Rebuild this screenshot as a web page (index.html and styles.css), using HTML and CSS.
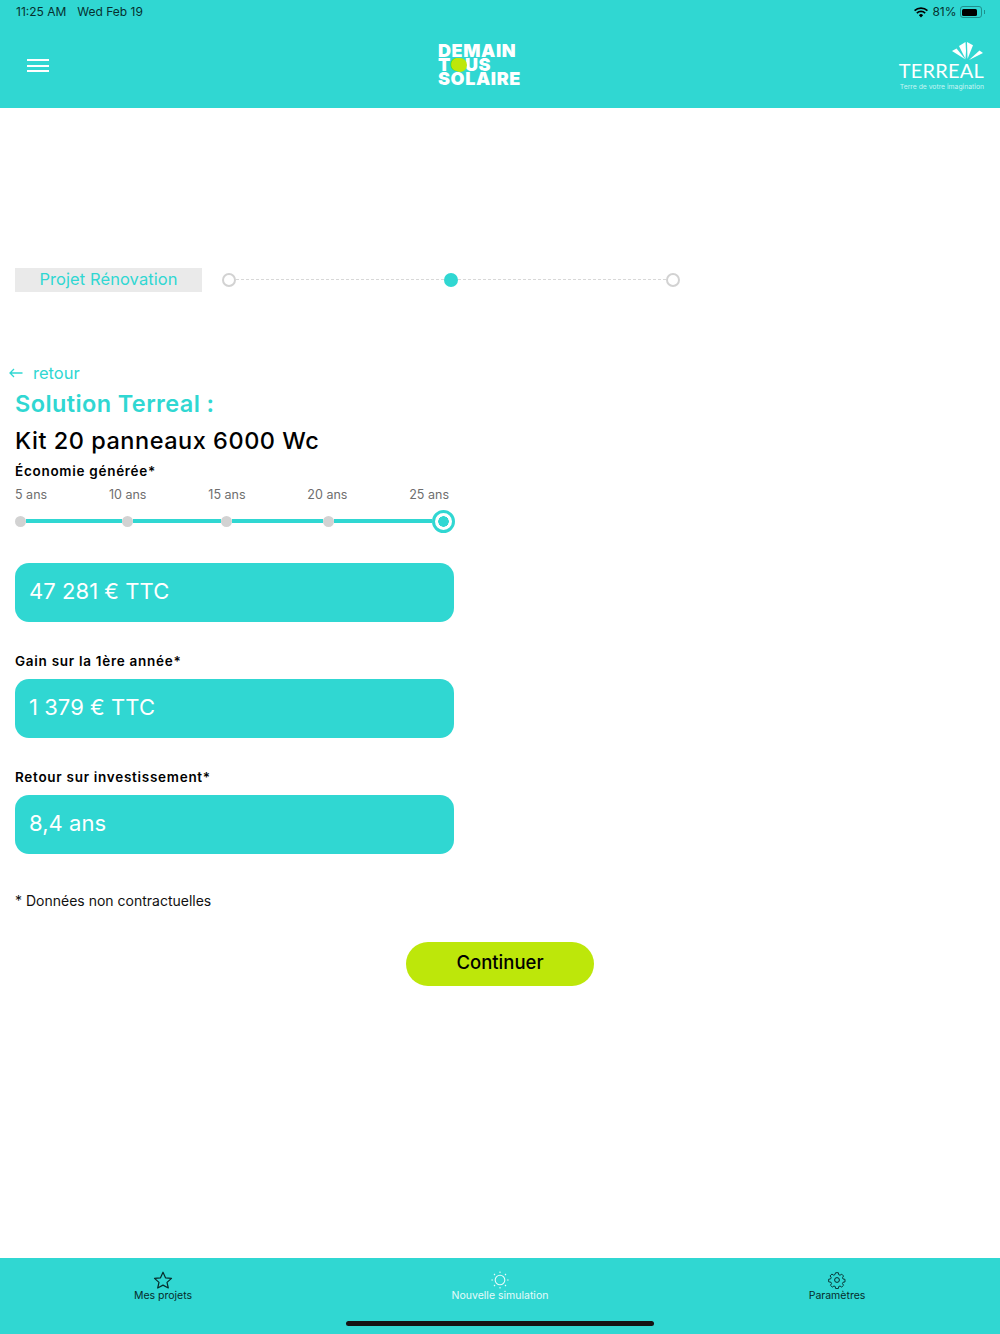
FILE: index.html
```html
<!DOCTYPE html>
<html lang="fr">
<head>
<meta charset="utf-8">
<title>Solution Terreal</title>
<link rel="stylesheet" href="styles.css">
</head>
<body>
<div class="app">
  <header class="header">
    <div class="status">
      <div class="status-left"><span>11:25 AM</span><span>Wed Feb 19</span></div>
      <div class="status-right">
        <svg class="wifi" width="14" height="11" viewBox="0 0 16 12"><path d="M8 11.600 5.600 9a3.400 3.400 0 0 1 4.800 0zM3.900 7.300 2.600 5.900a7.700 7.700 0 0 1 10.800 0l-1.300 1.400a5.900 5.900 0 0 0-8.200 0zM1.300 4.600 0 3.200a11.400 11.400 0 0 1 16 0l-1.300 1.400a9.600 9.600 0 0 0-13.400 0z" fill="#000"/></svg>
        <span>81%</span>
        <span class="battery"><span class="battery-fill"></span></span>
        <span class="battery-cap"></span>
      </div>
    </div>
    <div class="header-main">
      <button class="burger" aria-label="Menu"><span></span><span></span><span></span></button>
      <div class="logo">
        <span>DEMAIN</span><span>T<span class="logo-o">O</span>US</span><span>SOLAIRE</span>
        <i class="logo-dot"></i>
      </div>
      <div class="terreal">
        <svg class="terreal-mark" width="31" height="20" viewBox="0 0 31 20"><path d="M0 10 4.500 7.500 13.500 18.500z" fill="#fff"/><path d="M7 5 13.500 1 14 10 13.500 18z" fill="#fff"/><path d="M15 1 21 4.300 15.500 18z" fill="#fff"/><path d="M17 19 27.500 9.500 31 12z" fill="#fff"/></svg>
        <span class="terreal-name">TERREAL</span>
        <span class="terreal-tag">Terre de votre imagination</span>
      </div>
    </div>
  </header>

  <main class="main">
    <div class="stepper-row">
      <div class="project">Projet Rénovation</div>
      <div class="stepper">
        <span class="step"></span><span class="dash"></span>
        <span class="step step-active"></span><span class="dash"></span>
        <span class="step"></span>
      </div>
    </div>

    <a class="back"><svg width="14" height="10" viewBox="0 0 14 10"><path d="M13.500 5H1M5 1 1 5l4 4" fill="none" stroke="#30d7d2" stroke-width="1.300"/></svg><span>retour</span></a>

    <h1 class="title">Solution Terreal :</h1>
    <h2 class="kit">Kit 20 panneaux 6000 Wc</h2>

    <div class="label label-first">Économie générée*</div>
    <div class="ticks"><span>5 ans</span><span>10 ans</span><span>15 ans</span><span>20 ans</span><span>25 ans</span></div>
    <div class="slider">
      <span class="knob"></span><span class="seg" style="width:96px"></span>
      <span class="knob"></span><span class="seg" style="width:88px"></span>
      <span class="knob"></span><span class="seg" style="width:91px"></span>
      <span class="knob"></span><span class="seg" style="width:98px"></span>
      <span class="thumb"></span>
    </div>

    <div class="value value-first">47 281 € TTC</div>
    <div class="label">Gain sur la 1ère année*</div>
    <div class="value">1 379 € TTC</div>
    <div class="label">Retour sur investissement*</div>
    <div class="value">8,4 ans</div>

    <p class="note">* Données non contractuelles</p>

    <div class="actions"><button class="continue">Continuer</button></div>
  </main>

  <nav class="tabbar">
    <div class="tabs">
      <a class="tab">
        <svg width="20" height="18" viewBox="0 0 20 18"><path d="M10 1.200 12.500 6.800 18.500 7.400 14 11.400 15.300 17 10 14.100 4.700 17 6 11.400 1.500 7.400 7.500 6.800z" fill="none" stroke="#062b2b" stroke-width="1.200" stroke-linejoin="round"/></svg>
        <span>Mes projets</span>
      </a>
      <a class="tab tab-active">
        <svg width="20" height="18" viewBox="0 0 20 18"><circle cx="10" cy="9" r="4.800" fill="none" stroke="#e6fbfa" stroke-width="1.100"/><path d="M10 .400v1.500M10 16.100v1.500M1.400 9h1.500M17.100 9h1.500M4 3l1 1M15 14l1 1M16 3l-1 1M5 14l-1 1" stroke="#e6fbfa" stroke-width="1.100"/></svg>
        <span>Nouvelle simulation</span>
      </a>
      <a class="tab">
        <svg width="20" height="18" viewBox="0 0 20 18"><circle cx="10" cy="9" r="2.400" fill="none" stroke="#062b2b"/><path d="M8.500 1h3l.4 2.200 1.400.6 1.900-1.200 2 2-1.200 1.900.6 1.400 2.200.4v2.800l-2.200.4-.6 1.400 1.200 1.900-2 2-1.900-1.200-1.400.6-.4 2.200h-3l-.4-2.200-1.400-.6-1.900 1.200-2-2 1.200-1.900-.6-1.400L.8 11V8.200l2.200-.4.600-1.400-1.200-1.900 2-2 1.900 1.200 1.400-.6z" transform="translate(.9 .8) scale(.91)" fill="none" stroke="#062b2b" stroke-width="1"/></svg>
        <span>Paramètres</span>
      </a>
    </div>
    <div class="home-indicator"></div>
  </nav>
</div>
</body>
</html>
```

FILE: styles.css
```css
* { box-sizing: border-box; }
html, body { margin: 0; padding: 0; }
body { font-family: "Inter", "Liberation Sans", sans-serif; background: #fff; color: #000; }
.app { display: flex; flex-direction: column; width: 1000px; height: 1334px; overflow: hidden; }

.header { height: 108px; background: #30d7d2; flex: none; }
.status { height: 24px; padding: 5px 15px 0 16px; display: flex; justify-content: space-between; font-size: 12px; line-height: 14px; color: #06302f; }
.status-left { display: flex; gap: 11px; }
.status-right { display: flex; align-items: center; gap: 3px; height: 14px; }
.wifi { margin-right: 1px; }
.battery { width: 22px; height: 12px; border: 1px solid #1f8f8c; border-radius: 3px; padding: 1.500px; display: block; }
.battery-fill { display: block; width: 15px; height: 7px; background: #000; border-radius: 1.500px; }
.battery-cap { width: 1.500px; height: 4px; background: #1f8f8c; margin-left: -1px; }

.header-main { height: 84px; display: flex; align-items: center; justify-content: space-between; position: relative; }
.burger { border: 0; background: none; padding: 0; margin: -1px 0 0 27px; width: 22px; height: 13px; display: flex; flex-direction: column; justify-content: space-between; }
.burger span { display: block; height: 2px; background: #fff; }

.logo { position: absolute; left: 438px; top: 20px; display: flex; flex-direction: column; font-weight: 900; font-size: 18px; line-height: 14px; color: #fff; letter-spacing: .6px; }
.logo-o { color: #bde70a; }
.logo-dot { position: absolute; left: 15px; top: 14px; width: 14px; height: 14px; border-radius: 50%; background: #bde70a; }

.terreal { display: flex; flex-direction: column; align-items: flex-end; margin-right: 16px; width: 86px; position: relative; }
.terreal-mark { margin-right: 1px; }
.terreal-name { font-family: "Lato", sans-serif; font-size: 20px; line-height: 19px; color: #fff; letter-spacing: .2px; white-space: nowrap; }
.terreal-tag { font-size: 6.800px; line-height: 9px; color: #c8f5f3; white-space: nowrap; margin-top: 2px; }

.main { flex: 1; padding: 160px 0 0 15px; }
.stepper-row { display: flex; align-items: center; height: 24px; }
.project { width: 187px; height: 24px; background: #eaeaea; color: #30d7d2; font-size: 16.500px; line-height: 22px; text-align: center; letter-spacing: .08px; }
.stepper { display: flex; align-items: center; margin-left: 20px; }
.step { width: 14px; height: 14px; border-radius: 50%; border: 2px solid #d2d2d2; flex: none; background: #fff; }
.step-active { background: #30d7d2; border-color: #30d7d2; }
.dash { width: 208px; height: 1px; margin-top: -1px; background: repeating-linear-gradient(90deg, #d8d8d8 0 3px, transparent 3px 5px); }

.back { display: flex; align-items: center; gap: 10px; margin: 70px 0 0 -6px; height: 22px; color: #30d7d2; font-size: 16.500px; }
.title { margin: 5px 0 0; font-size: 23.500px; line-height: 30px; font-weight: 600; letter-spacing: .4px; color: #30d7d2; }
.kit { margin: 7px 0 0; font-size: 23.500px; line-height: 30px; font-weight: 500; letter-spacing: .52px; color: #000; }

.label { font-size: 13.500px; line-height: 16px; font-weight: 600; letter-spacing: .72px; margin-top: 31px; height: 26px; }
.label-first { margin-top: 7px; height: 16px; }
.ticks { display: flex; justify-content: space-between; width: 434px; margin-top: 8px; font-size: 12.500px; line-height: 16px; color: #6e6e6e; }
.slider { display: flex; align-items: center; width: 445px; height: 24px; margin-top: 6px; }
.knob { width: 11px; height: 11px; border-radius: 50%; background: #d2d2d2; flex: none; }
.seg { height: 4px; background: #30d7d2; flex: none; }
.thumb { width: 23px; height: 23px; border-radius: 50%; border: 3px solid #30d7d2; background: radial-gradient(circle, #30d7d2 0 5px, #fff 5.500px); flex: none; }

.value { width: 439px; height: 59px; border-radius: 14px; background: #30d7d2; color: #fff; font-size: 22px; line-height: 56px; letter-spacing: .05px; padding-left: 14px; }
.value-first { margin-top: 30px; }
.note { margin: 38px 0 0; font-size: 14px; line-height: 18px; color: #111; }
.actions { width: 970px; display: flex; justify-content: center; margin-top: 32px; }
.continue { width: 188px; height: 44px; border: 0; border-radius: 22px; background: #bde70a; color: #000; font: 500 18.500px/38px "Inter", sans-serif; padding: 0 0 4px; }

.tabbar { height: 76px; background: #30d7d2; flex: none; position: relative; }
.tabs { display: grid; grid-template-columns: 326px 1fr 326px; padding-top: 13px; }
.tab { display: flex; flex-direction: column; align-items: center; font-size: 10.500px; line-height: 14px; color: #062b2b; }
.tab-active { color: #e6fbfa; }
.home-indicator { position: absolute; left: 346px; bottom: 8px; width: 308px; height: 5px; border-radius: 3px; background: #141414; }
```
